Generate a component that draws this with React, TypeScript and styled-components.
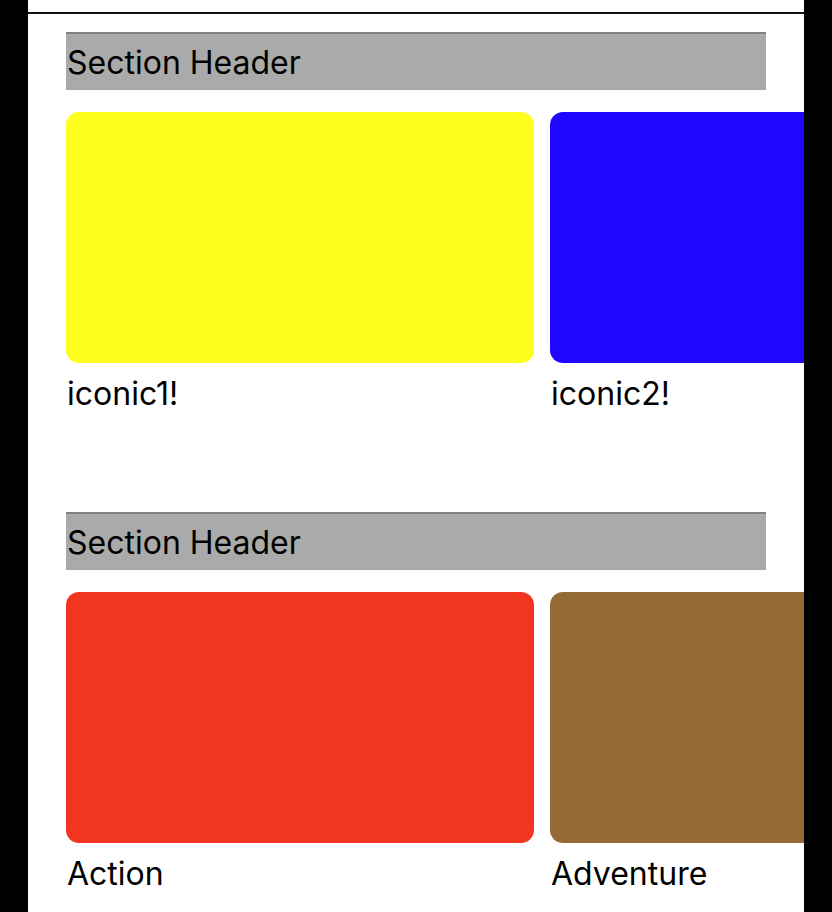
import React from "react";
import styled, { createGlobalStyle } from "styled-components";

const Global = createGlobalStyle`
  html, body { margin: 0; padding: 0; background: #000; }
  body { font-family: Inter, "Liberation Sans", sans-serif; }
`;

const Screen = styled.div`
  width: 832px;
  height: 912px;
  background: #000;
  overflow: hidden;
  display: flex;
  flex-direction: column;
  align-items: flex-start;
  padding-left: 28px;
  box-sizing: border-box;
`;

const Sheet = styled.div`
  width: 776px;
  flex: 1;
  background: #fff;
  display: flex;
  flex-direction: column;
  overflow: hidden;
`;

const TopBar = styled.div`
  height: 12px;
  background: #fff;
  border-bottom: 2px solid #111;
  flex-shrink: 0;
`;

const Content = styled.div`
  padding: 18px 0 0 38px;
  display: flex;
  flex-direction: column;
`;

const Section = styled.section`
  height: 480px;
  display: flex;
  flex-direction: column;
  flex-shrink: 0;
`;

const Header = styled.div`
  width: 699px;
  height: 56px;
  background: #aaaaaa;
  border-top: 2px solid #808080;
  display: flex;
  align-items: center;
  font-size: 32px;
  color: #000;
  padding-left: 1px;
`;

const Row = styled.div`
  display: flex;
  gap: 16px;
  margin-top: 22px;
`;

const Item = styled.div`
  width: 468px;
  flex-shrink: 0;
  display: flex;
  flex-direction: column;
`;

const Tile = styled.div<{ $color: string }>`
  height: 251px;
  border-radius: 13px;
  background: ${(p) => p.$color};
`;

const Label = styled.div`
  font-size: 32px;
  line-height: 40px;
  margin-top: 11px;
  padding-left: 1px;
  color: #000;
`;

const sections = [
  [
    { label: "iconic1!", color: "#ffff1f" },
    { label: "iconic2!", color: "#1f06ff" },
  ],
  [
    { label: "Action", color: "#f0361e" },
    { label: "Adventure", color: "#946a37" },
  ],
];

export default function App() {
  return (
    <>
      <Global />
      <Screen>
        <Sheet>
          <TopBar />
          <Content>
            {sections.map((items, i) => (
              <Section key={i}>
                <Header>Section Header</Header>
                <Row>
                  {items.map((it) => (
                    <Item key={it.label}>
                      <Tile $color={it.color} />
                      <Label>{it.label}</Label>
                    </Item>
                  ))}
                </Row>
              </Section>
            ))}
          </Content>
        </Sheet>
      </Screen>
    </>
  );
}
